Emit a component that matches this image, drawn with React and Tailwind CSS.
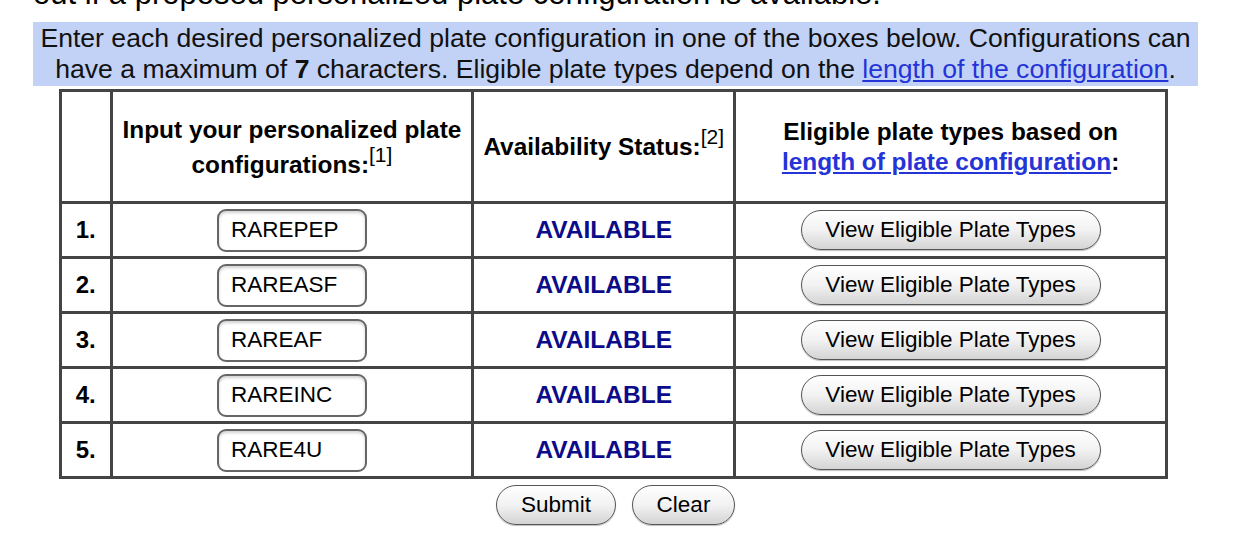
import React from "react";

const rows = ["RAREPEP", "RAREASF", "RAREAF", "RAREINC", "RARE4U"];

function PillButton({ children, className = "" }) {
  return (
    <button
      type="button"
      className={
        "h-[40px] rounded-full border-[1.5px] border-[#555] bg-gradient-to-b from-white via-[#f2f2f2] to-[#d4d4d4] text-[22.5px] text-black shadow-[0_1px_1px_rgba(0,0,0,0.25)] " +
        className
      }
    >
      {children}
    </button>
  );
}

export default function App() {
  return (
    <div className="w-[1242px] h-[537px] overflow-hidden bg-white font-['Liberation_Sans',Arial,sans-serif] text-black">
      <div className="ml-[33px] w-[1165px]">
        <div className="-mt-[22px] text-[31px] leading-[31px] whitespace-nowrap">
          out if a proposed personalized plate configuration is available.
        </div>
        <div className="mt-[13px] bg-[#c2d2f6] py-[1px] text-center text-[26.6px] leading-[31px] text-[#111] whitespace-nowrap">
          Enter each desired personalized plate configuration in one of the boxes below. Configurations can
          <br />
          have a maximum of <b>7</b> characters. Eligible plate types depend on the{" "}
          <a href="#" className="text-[#2534d6] underline">
            length of the configuration
          </a>
          .
        </div>
        <table className="ml-[26px] mt-[3px] w-[1109px] border-collapse border-[3px] border-[#444] text-center">
          <colgroup>
            <col className="w-[51px]" />
            <col className="w-[362px]" />
            <col className="w-[262px]" />
            <col className="w-[434px]" />
          </colgroup>
          <thead>
            <tr className="h-[112px]">
              <th className="border-[3px] border-[#444]"></th>
              <th className="border-[3px] border-[#444] px-1 text-[24.4px] leading-[35px] font-bold whitespace-nowrap">
                Input your personalized plate
                <br />
                configurations:
                <sup className="font-normal text-[21px]">[1]</sup>
              </th>
              <th className="border-[3px] border-[#444] px-1 text-[24.4px] leading-[30px] font-bold whitespace-nowrap">
                Availability Status:<sup className="font-normal text-[21px]">[2]</sup>
              </th>
              <th className="border-[3px] border-[#444] px-2 text-[24.4px] leading-[30px] font-bold">
                Eligible plate types based on
                <br />
                <a href="#" className="text-[#2534d6] underline">
                  length of plate configuration
                </a>
                :
              </th>
            </tr>
          </thead>
          <tbody>
            {rows.map((v, i) => (
              <tr key={v} className="h-[55px]">
                <td className="border-[3px] border-[#444] text-[24px] font-bold">{i + 1}.</td>
                <td className="border-[3px] border-[#444]">
                  <div className="mx-auto flex h-[43px] w-[150px] items-center rounded-[9px] border-2 border-[#666] bg-white px-[12px] text-left text-[22.5px] shadow-[inset_0_2px_3px_rgba(0,0,0,0.18)]">
                    {v}
                  </div>
                </td>
                <td className="border-[3px] border-[#444] text-[24.5px] font-bold text-[#0c0c8a]">AVAILABLE</td>
                <td className="border-[3px] border-[#444]">
                  <PillButton className="w-[300px]">View Eligible Plate Types</PillButton>
                </td>
              </tr>
            ))}
          </tbody>
        </table>
        <div className="mt-[6px] flex justify-center gap-[16px]">
          <PillButton className="w-[120px]">Submit</PillButton>
          <PillButton className="w-[103px]">Clear</PillButton>
        </div>
      </div>
    </div>
  );
}
